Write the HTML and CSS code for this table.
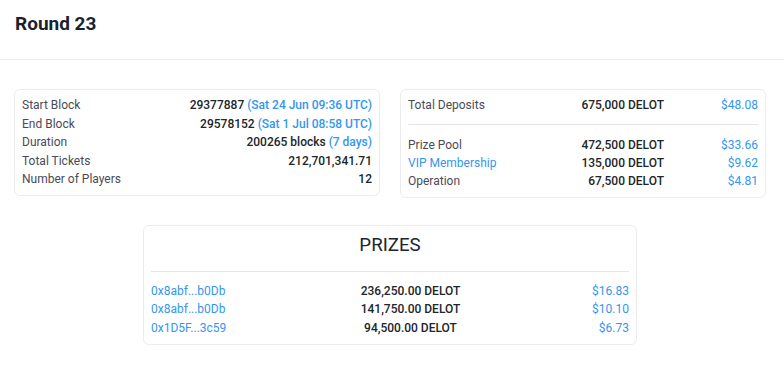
FILE: index.html
```html
<!DOCTYPE html>
<html lang="en">
<head>
<meta charset="utf-8">
<title>Round 23</title>
<link rel="stylesheet" href="styles.css">
</head>
<body>
<header class="header">
  <h1 class="title">Round 23</h1>
</header>
<main class="main">
  <div class="stats">
    <section class="card info">
      <div class="row"><span class="label">Start Block</span><span class="value">29377887 <span class="link">(Sat 24 Jun 09:36 UTC)</span></span></div>
      <div class="row"><span class="label">End Block</span><span class="value">29578152 <span class="link">(Sat 1 Jul 08:58 UTC)</span></span></div>
      <div class="row"><span class="label">Duration</span><span class="value">200265 blocks <span class="link">(7 days)</span></span></div>
      <div class="row"><span class="label">Total Tickets</span><span class="value">212,701,341.71</span></div>
      <div class="row"><span class="label">Number of Players</span><span class="value">12</span></div>
    </section>
    <section class="card deposits">
      <div class="drow"><span class="label">Total Deposits</span><span class="value">675,000 DELOT</span><span class="usd">$48.08</span></div>
      <hr class="divider deposits-divider">
      <div class="drow"><span class="label">Prize Pool</span><span class="value">472,500 DELOT</span><span class="usd">$33.66</span></div>
      <div class="drow"><span class="label link">VIP Membership</span><span class="value">135,000 DELOT</span><span class="usd">$9.62</span></div>
      <div class="drow"><span class="label">Operation</span><span class="value">67,500 DELOT</span><span class="usd">$4.81</span></div>
    </section>
  </div>
  <section class="card prizes">
    <h2 class="prizes-title">PRIZES</h2>
    <hr class="divider prizes-divider">
    <div class="prow"><span class="link">0x8abf...b0Db</span><span class="value center">236,250.00 DELOT</span><span class="usd">$16.83</span></div>
    <div class="prow"><span class="link">0x8abf...b0Db</span><span class="value center">141,750.00 DELOT</span><span class="usd">$10.10</span></div>
    <div class="prow"><span class="link">0x1D5F...3c59</span><span class="value center">94,500.00 DELOT</span><span class="usd">$6.73</span></div>
  </section>
</main>
</body>
</html>
```
FILE: styles.css
```css
* { box-sizing: border-box; }

body {
  margin: 0;
  background: #ffffff;
  font-family: Roboto, "Liberation Sans", Arial, sans-serif;
  font-size: 12px;
  color: #212529;
}

.header {
  height: 60px;
  padding: 12px 15px 0;
  border-bottom: 1px solid #ececf0;
}

.title {
  margin: 0;
  font-size: 19px;
  line-height: 23px;
  font-weight: 700;
  color: #1c1f2e;
}

.main {
  padding: 29px 18px 0 14px;
}

.stats {
  display: grid;
  grid-template-columns: 1fr 1fr;
  column-gap: 20px;
  align-items: start;
}

.card {
  border: 1px solid #ececf0;
  border-radius: 6px;
  background: #fff;
}

.info {
  padding: 6.3px 7px 6px;
}

.deposits {
  padding: 6.3px 7px 6.5px;
}

.row {
  display: flex;
  justify-content: space-between;
  line-height: 18.45px;
}

.label {
  color: #4a4a58;
}

.value {
  font-weight: 500;
  color: #212529;
  white-space: nowrap;
}

.link {
  color: #3396f0;
}

.usd {
  color: #3396f0;
  text-align: right;
}

.drow {
  display: grid;
  grid-template-columns: 1fr auto 94px;
  line-height: 18.45px;
}

.divider {
  border: 0;
  border-top: 1px solid #e3e3ec;
  margin: 0;
}

.deposits-divider {
  margin: 9.5px 0 10.3px;
}

.prizes {
  width: 494px;
  margin: 27px auto 0;
  padding: 8px 7px 7px;
}

.prizes-title {
  margin: 0;
  text-align: center;
  font-size: 18.7px;
  font-weight: 400;
  line-height: 23px;
  color: #222230;
}

.prizes-divider {
  margin: 14px 0 9.5px;
}

.prow {
  display: grid;
  grid-template-columns: 180px 159px 1fr;
  line-height: 18.4px;
}

.center {
  text-align: center;
}
```
